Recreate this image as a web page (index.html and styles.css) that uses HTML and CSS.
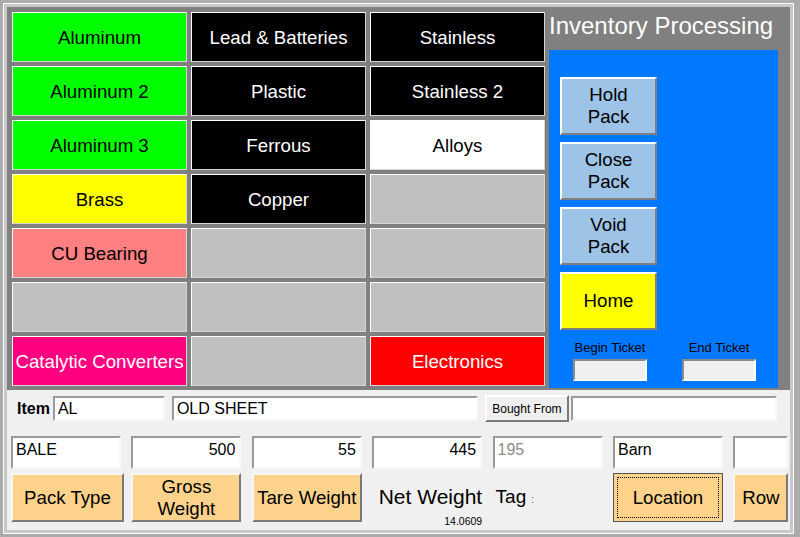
FILE: index.html
```html
<!DOCTYPE html>
<html lang="en">
  <head>
    <meta charset="UTF-8">
    <title>Inventory Processing</title>
    <link rel="stylesheet" href="styles.css">
  </head>
  <body>
    <div class="app">
      <div class="top">
        <div class="grid">
          <button class="cat green">Aluminum</button>
          <button class="cat black">Lead &amp; Batteries</button>
          <button class="cat black">Stainless</button>
          <button class="cat green">Aluminum 2</button>
          <button class="cat black">Plastic</button>
          <button class="cat black">Stainless 2</button>
          <button class="cat green">Aluminum 3</button>
          <button class="cat black">Ferrous</button>
          <button class="cat white">Alloys</button>
          <button class="cat yellow">Brass</button>
          <button class="cat black">Copper</button>
          <button class="cat"></button>
          <button class="cat salmon">CU Bearing</button>
          <button class="cat"></button>
          <button class="cat"></button>
          <button class="cat"></button>
          <button class="cat"></button>
          <button class="cat"></button>
          <button class="cat pink">Catalytic Converters</button>
          <button class="cat"></button>
          <button class="cat red">Electronics</button>
        </div>
        <div class="side">
          <div class="title">Inventory Processing</div>
          <div class="panel">
            <div class="actions">
              <button class="act">Hold<br>Pack</button>
              <button class="act">Close<br>Pack</button>
              <button class="act">Void<br>Pack</button>
              <button class="act home">Home</button>
            </div>
            <div class="tickets">
              <div class="ticket">
                <span>Begin Ticket</span>
                <input class="tbox" type="text">
              </div>
              <div class="ticket">
                <span>End Ticket</span>
                <input class="tbox" type="text">
              </div>
            </div>
          </div>
        </div>
      </div>
      <div class="bottom">
        <div class="itemrow">
          <label class="itemlabel">Item</label>
          <input class="field code" type="text" value="AL">
          <input class="field desc" type="text" value="OLD SHEET">
          <button class="small">Bought From</button>
          <input class="field vendor" type="text">
        </div>
        <div class="pack">
          <input class="field big" type="text" value="BALE">
          <input class="field big num" type="text" value="500">
          <input class="field big num" type="text" value="55">
          <input class="field big num" type="text" value="445">
          <input class="field big dim" type="text" value="195">
          <input class="field big" type="text" value="Barn">
          <input class="field big" type="text">
          <button class="orange wide">Pack Type</button>
          <button class="orange">Gross<br>Weight</button>
          <button class="orange">Tare Weight</button>
          <div class="net">
            <span class="netlabel">Net Weight</span>
            <span class="version">14.0609</span>
          </div>
          <div class="tag">Tag<span class="colon">:</span></div>
          <button class="orange focus">Location</button>
          <button class="orange">Row</button>
        </div>
      </div>
    </div>
  </body>
</html>
```

FILE: styles.css
```css
*{box-sizing:border-box}
body{margin:0;width:800px;height:537px;overflow:hidden;background:#ababab;padding:7px 10px 7px 7px;font-family:"Liberation Sans",Arial,sans-serif;color:#000}
button,input{font-family:inherit;margin:0}
.app{height:523px;display:flex;flex-direction:column;box-shadow:0 0 0 3px #c8c8c8,0 0 0 4px #fff}

.top{height:383px;background:#808080;display:flex;gap:4px;padding:0 12px 2px 5px}
.grid{margin-top:5px;display:grid;grid-template-columns:repeat(3,175px);grid-template-rows:repeat(7,50px);gap:4px}
.cat{padding:2px 0 0;white-space:nowrap;font-size:18.67px;background:#c0c0c0;color:#000;border:1px solid;border-color:#fff #d4d4d4 #d4d4d4 #fff}
.green{background:#00ff00}
.black{background:#000;color:#fff}
.white{background:#fff}
.yellow{background:#ffff00}
.salmon{background:#ff8080}
.pink{background:#ff0080;color:#fff}
.red{background:#ff0000;color:#fff}

.side{width:229px;display:flex;flex-direction:column}
.title{height:43px;line-height:37px;color:#fff;font-size:24px;white-space:nowrap}
.panel{flex:1;background:#0078ff;padding:27px 0 0 11px}
.actions{display:flex;flex-direction:column;gap:7px}
.act{width:97px;height:58px;padding:0;font-size:18.67px;line-height:22px;background:#9dc3e6;border:2px solid;border-color:#fff #7f7f7f #7f7f7f #fff}
.home{background:#ffff00}
.tickets{display:flex;gap:35px;padding-left:13px;margin-top:10px}
.ticket{width:74px;display:flex;flex-direction:column;align-items:center;gap:4px;font-size:13px;line-height:15px;white-space:nowrap}
.tbox{width:74px;height:22px;background:#f0f0f0;border:2px solid;border-color:#8a8a8a #fff #fff #8a8a8a}

.bottom{flex:1;background:#f0f0f0;padding:5px 2px 0 4px}
.itemrow{display:flex;align-items:center;height:27px}
.itemlabel{font-weight:bold;font-size:16px;margin:0 3px 0 6px}
.field{height:25px;font-size:16px;padding:0 3px;background:#fff;border:2px solid;border-color:#9a9a9a #f8f8f8 #f8f8f8 #9a9a9a;color:#000}
.code{width:112px}
.desc{width:306px;margin-left:7px}
.vendor{width:206px;margin-left:2px}
.small{width:84px;height:27px;margin-left:7px;padding:0;font-size:12px;background:#efefef;border:2px solid;border-color:#fff #7a7a7a #7a7a7a #fff}

.pack{margin-top:14px;display:grid;grid-template-columns:repeat(6,110px) 55px;grid-template-rows:33px 49px;column-gap:10.4px;row-gap:4px}
.big{width:100%;height:33px;padding-bottom:5px}
.num{text-align:right;padding-right:4px}
.dim{color:#8c8c8c}
.orange{padding:0;font-size:18.67px;line-height:22px;background:#fdd38b;border:2px solid;border-color:#f6f6f6 #7a7a7a #7a7a7a #f6f6f6}
.wide{width:113px}
.focus{border:1px solid #555;outline:1px dotted #000;outline-offset:-5px}
.net{display:flex;flex-direction:column;align-items:flex-end}
.netlabel{font-size:21px;line-height:24px;margin-top:12px;white-space:nowrap}
.version{font-size:10.5px;line-height:12px;margin-top:6px}
.tag{font-size:19px;line-height:24px;padding:12px 0 0 3px;white-space:nowrap}
.colon{font-size:10px;color:#8b4513;margin-left:5px}
```
